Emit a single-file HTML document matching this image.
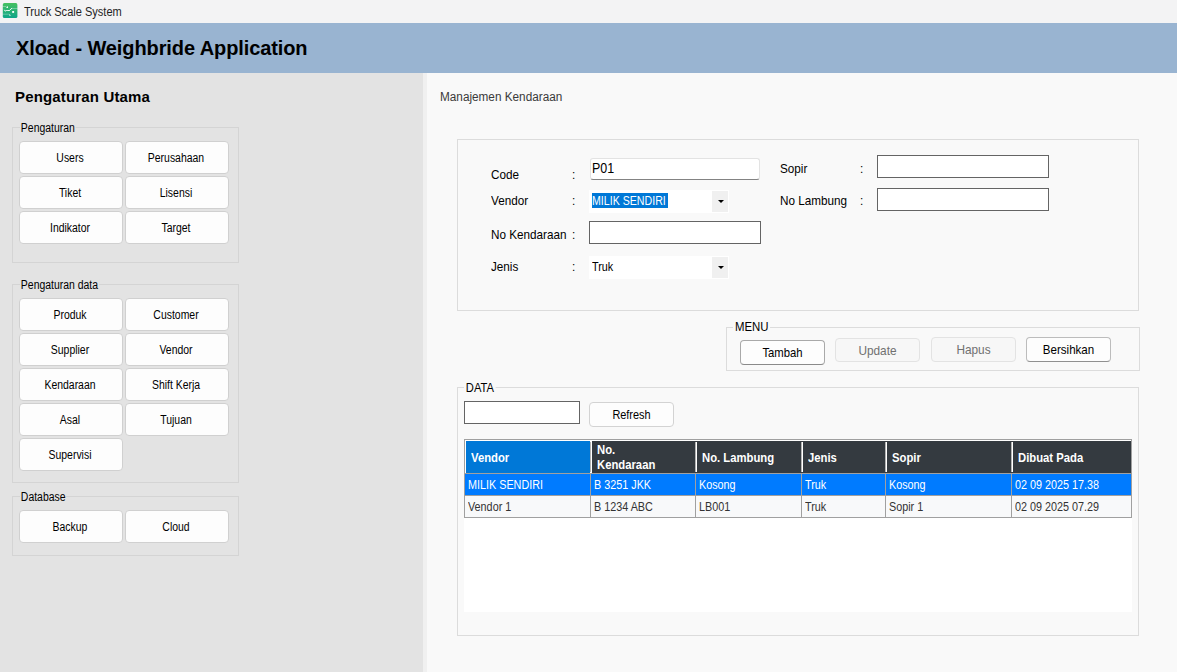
<!DOCTYPE html>
<html><head><meta charset="utf-8">
<style>
*{margin:0;padding:0;box-sizing:border-box}
html,body{width:1177px;height:672px;overflow:hidden;background:#f9f9f9;font-family:"Liberation Sans",sans-serif;color:#000}
.a{position:absolute}

.t{position:absolute;white-space:nowrap;line-height:1}
#titlebar{left:0;top:0;width:1177px;height:23px;background:#f3f3f4}
#hdr{left:0;top:23px;width:1177px;height:50px;background:#99b4d1}
#left{left:0;top:73px;width:423px;height:599px;background:#e3e3e3}
#strip{left:423px;top:73px;width:4px;height:599px;background:#f0f0f0}
#right{left:427px;top:73px;width:750px;height:599px;background:#f9f9f9}
.grp{position:absolute;border:1px solid #d4d4d4}
.btn{position:absolute;background:#fdfdfd;border:1px solid #d0d0d0;border-radius:4px;font-size:12px;text-align:center;color:#000}
.btn span{position:absolute;left:0;right:2px;top:10px;line-height:1;transform:scaleX(0.87)}
.lbl{position:absolute;font-size:12px;line-height:1;white-space:nowrap;padding:0 2px}
.glbl{position:absolute;font-size:12px;line-height:1;white-space:nowrap;background:#e3e3e3;padding:0 1px;transform:scaleX(0.87);transform-origin:0 0}
.rlbl{position:absolute;font-size:13px;line-height:1;white-space:nowrap;color:#000;transform:scaleX(0.9);transform-origin:0 0}
.tb{position:absolute;background:#fff;border:1px solid #646464}
.wbtn{position:absolute;background:#fdfdfd;border:1px solid #b8b8b8;border-radius:4px;font-size:13px;text-align:center}
.wbtn.dis{background:#f7f7f7;border-color:#e3e3e3;color:#707070}
.wbtn span{position:absolute;left:0;right:0;line-height:1;transform:scaleX(0.89)}
.th{position:absolute;font-size:12px;font-weight:bold;color:#fff;white-space:nowrap;line-height:1;transform:scaleX(0.94);transform-origin:0 0}
.td{position:absolute;font-size:12px;white-space:nowrap;line-height:1;transform:scaleX(0.9);transform-origin:0 0}
</style></head><body>
<div id="titlebar" class="a"></div>
<svg class="a" style="left:0;top:0" width="22" height="22" viewBox="0 0 22 22">
<defs><linearGradient id="ig" x1="0" y1="0" x2="0" y2="1"><stop offset="0" stop-color="#46c060"/><stop offset="1" stop-color="#0ea58a"/></linearGradient></defs>
<rect x="2.8" y="3.1" width="14.6" height="15" rx="1.6" fill="url(#ig)"/>
<g stroke="#fff" fill="none" stroke-linecap="round">
<path d="M3 6.5H6" stroke-width="0.7" opacity="0.45"/>
<path d="M12 8.5H17.3" stroke-width="0.7" opacity="0.45"/>
<path d="M3 14.2H8.5" stroke-width="0.7" opacity="0.45"/>
<path d="M4.4 10.2Q4.6 11.4 5.9 11L6.3 10.5H9.4L11.8 8.3" stroke-width="0.9" stroke-dasharray="1.4 0.6"/>
</g>
<g fill="#fff">
<path d="M6 7.8L7.9 5.9L8 7.9Z"/>
<rect x="12.2" y="11" width="1.9" height="1.9"/>
<path d="M9 14.1L10.9 15.3L9.7 15.9Z"/>
</g>
</svg>
<div class="t" style="left:24px;top:6px;font-size:12px;color:#1f1f1f;transform:scaleX(0.92);transform-origin:0 0">Truck Scale System</div>
<div id="hdr" class="a"></div>
<div class="t" style="left:16px;top:38px;font-size:20px;font-weight:bold;letter-spacing:-0.1px">Xload - Weighbride Application</div>
<div id="left" class="a"></div>
<div id="strip" class="a"></div>
<div id="right" class="a"></div>

<div class="t" style="left:15px;top:89px;font-size:15px;font-weight:bold;letter-spacing:0.16px">Pengaturan Utama</div>

<!-- group 1 -->
<div class="grp" style="left:12px;top:127px;width:227px;height:136px"></div>
<div class="glbl" style="left:20px;top:122px">Pengaturan</div>
<div class="btn" style="left:19px;top:141px;width:104px;height:33px"><span>Users</span></div>
<div class="btn" style="left:125px;top:141px;width:104px;height:33px"><span>Perusahaan</span></div>
<div class="btn" style="left:19px;top:176px;width:104px;height:33px"><span>Tiket</span></div>
<div class="btn" style="left:125px;top:176px;width:104px;height:33px"><span>Lisensi</span></div>
<div class="btn" style="left:19px;top:211px;width:104px;height:33px"><span>Indikator</span></div>
<div class="btn" style="left:125px;top:211px;width:104px;height:33px"><span>Target</span></div>

<!-- group 2 -->
<div class="grp" style="left:12px;top:284px;width:227px;height:199px"></div>
<div class="glbl" style="left:20px;top:279px">Pengaturan data</div>
<div class="btn" style="left:19px;top:298px;width:104px;height:33px"><span>Produk</span></div>
<div class="btn" style="left:125px;top:298px;width:104px;height:33px"><span>Customer</span></div>
<div class="btn" style="left:19px;top:333px;width:104px;height:33px"><span>Supplier</span></div>
<div class="btn" style="left:125px;top:333px;width:104px;height:33px"><span>Vendor</span></div>
<div class="btn" style="left:19px;top:368px;width:104px;height:33px"><span>Kendaraan</span></div>
<div class="btn" style="left:125px;top:368px;width:104px;height:33px"><span>Shift Kerja</span></div>
<div class="btn" style="left:19px;top:403px;width:104px;height:33px"><span>Asal</span></div>
<div class="btn" style="left:125px;top:403px;width:104px;height:33px"><span>Tujuan</span></div>
<div class="btn" style="left:19px;top:438px;width:104px;height:33px"><span>Supervisi</span></div>

<!-- group 3 -->
<div class="grp" style="left:12px;top:496px;width:227px;height:60px"></div>
<div class="glbl" style="left:20px;top:491px">Database</div>
<div class="btn" style="left:19px;top:510px;width:104px;height:33px"><span>Backup</span></div>
<div class="btn" style="left:125px;top:510px;width:104px;height:33px"><span>Cloud</span></div>

<!-- right panel -->
<div class="t" style="left:440px;top:91px;font-size:12px;color:#3a3a3a;transform:scaleX(0.98);transform-origin:0 0">Manajemen Kendaraan</div>

<div class="grp" style="left:457px;top:139px;width:682px;height:172px;border-color:#dcdcdc"></div>

<!-- form -->
<div class="rlbl" style="left:491px;top:168px">Code</div>
<div class="rlbl" style="left:572px;top:168px">:</div>
<div class="rlbl" style="left:491px;top:194px">Vendor</div>
<div class="rlbl" style="left:572px;top:194px">:</div>
<div class="rlbl" style="left:491px;top:228px">No Kendaraan</div>
<div class="rlbl" style="left:572px;top:228px">:</div>
<div class="rlbl" style="left:491px;top:260px">Jenis</div>
<div class="rlbl" style="left:572px;top:260px">:</div>

<div class="a" style="left:590px;top:158px;width:170px;height:22px;background:#fff;border:1px solid #e3e3e3;border-bottom:1px solid #838383;border-radius:3px"></div>
<div class="t" style="left:592px;top:161px;font-size:14px;transform:scaleX(0.89);transform-origin:0 0">P01</div>

<div class="a" style="left:589px;top:190px;width:140px;height:23px;background:#fff"></div>
<div class="a" style="left:712px;top:191px;width:16px;height:21px;background:#f0f0f0"></div>
<div class="a" style="left:718px;top:200px;width:0;height:0;border-left:3px solid transparent;border-right:3px solid transparent;border-top:3px solid #000"></div>
<div class="a" style="left:592px;top:193px;width:76px;height:15px;background:#0078d7"></div>
<div class="t" style="left:592px;top:195px;font-size:12px;color:#fff;transform:scaleX(0.885);transform-origin:0 0">MILIK SENDIRI</div>

<div class="tb" style="left:589px;top:221px;width:172px;height:23px"></div>

<div class="a" style="left:589px;top:256px;width:140px;height:23px;background:#fff"></div>
<div class="a" style="left:712px;top:257px;width:16px;height:21px;background:#f0f0f0"></div>
<div class="a" style="left:718px;top:266px;width:0;height:0;border-left:3px solid transparent;border-right:3px solid transparent;border-top:3px solid #000"></div>
<div class="t" style="left:592px;top:261px;font-size:12px;transform:scaleX(0.9);transform-origin:0 0">Truk</div>

<div class="rlbl" style="left:780px;top:162px">Sopir</div>
<div class="rlbl" style="left:860px;top:162px">:</div>
<div class="rlbl" style="left:780px;top:194px">No Lambung</div>
<div class="rlbl" style="left:860px;top:194px">:</div>
<div class="tb" style="left:877px;top:155px;width:172px;height:23px"></div>
<div class="tb" style="left:877px;top:188px;width:172px;height:23px"></div>

<!-- MENU -->
<div class="grp" style="left:726px;top:327px;width:414px;height:44px;border-color:#dcdcdc"></div>
<div class="t" style="left:733px;top:321px;font-size:12px;background:#f9f9f9;padding:0 2px;transform:scaleX(0.95);transform-origin:0 0">MENU</div>
<div class="wbtn" style="left:740px;top:340px;width:85px;height:25px;border-color:#a9a9a9;border-bottom-color:#8a8a8a"><span style="top:5px;transform:scaleX(0.87)">Tambah</span></div>
<div class="wbtn dis" style="left:835px;top:338px;width:85px;height:24px"><span style="top:5px;transform:scaleX(0.91)">Update</span></div>
<div class="wbtn dis" style="left:931px;top:337px;width:85px;height:25px"><span style="top:5px;transform:scaleX(0.91)">Hapus</span></div>
<div class="wbtn" style="left:1026px;top:337px;width:85px;height:25px;border-color:#bcbcbc;border-bottom-color:#909090"><span style="top:5px">Bersihkan</span></div>

<!-- DATA -->
<div class="grp" style="left:457px;top:387px;width:682px;height:249px;border-color:#dcdcdc"></div>
<div class="t" style="left:464px;top:382px;font-size:12px;background:#f9f9f9;padding:0 2px;transform:scaleX(0.93);transform-origin:0 0">DATA</div>
<div class="tb" style="left:464px;top:401px;width:116px;height:23px"></div>
<div class="wbtn" style="left:589px;top:402px;width:85px;height:25px;border-color:#d3d3d3"><span style="top:5px;transform:scaleX(0.84)">Refresh</span></div>

<div class="a" style="left:464px;top:439px;width:668px;height:173px;background:#fff"></div>
<div class="a" style="left:464px;top:439px;width:668px;height:79px;border:1px solid #a0a0a0"></div>
<div class="a" style="left:466px;top:441px;width:124px;height:32px;background:#0078d7"></div>
<div class="a" style="left:592px;top:441px;width:539px;height:32px;background:#343a40"></div>
<div class="a" style="left:465px;top:474px;width:666px;height:21px;background:#007bff"></div>
<div class="a" style="left:465px;top:496px;width:666px;height:21px;background:#f8f9fa"></div>
<div class="a" style="left:465px;top:473px;width:666px;height:1px;background:#a0a0a0"></div>
<div class="a" style="left:465px;top:495px;width:666px;height:1px;background:#a0a0a0"></div>
<div class="a" style="left:590px;top:474px;width:1px;height:43px;background:#a0a0a0"></div>
<div class="a" style="left:695px;top:474px;width:1px;height:43px;background:#a0a0a0"></div>
<div class="a" style="left:801px;top:474px;width:1px;height:43px;background:#a0a0a0"></div>
<div class="a" style="left:885px;top:474px;width:1px;height:43px;background:#a0a0a0"></div>
<div class="a" style="left:1011px;top:474px;width:1px;height:43px;background:#a0a0a0"></div>
<div class="a" style="left:465px;top:440px;width:666px;height:1px;background:#fff"></div>
<div class="a" style="left:465px;top:440px;width:1px;height:33px;background:#fff"></div>
<div class="a" style="left:590px;top:442px;width:1px;height:30px;background:#b4b4b4"></div><div class="a" style="left:591px;top:442px;width:1px;height:30px;background:#fff"></div>
<div class="a" style="left:695px;top:442px;width:1px;height:30px;background:#b4b4b4"></div><div class="a" style="left:696px;top:442px;width:1px;height:30px;background:#fff"></div>
<div class="a" style="left:801px;top:442px;width:1px;height:30px;background:#b4b4b4"></div><div class="a" style="left:802px;top:442px;width:1px;height:30px;background:#fff"></div>
<div class="a" style="left:885px;top:442px;width:1px;height:30px;background:#b4b4b4"></div><div class="a" style="left:886px;top:442px;width:1px;height:30px;background:#fff"></div>
<div class="a" style="left:1011px;top:442px;width:1px;height:30px;background:#b4b4b4"></div><div class="a" style="left:1012px;top:442px;width:1px;height:30px;background:#fff"></div>
<div class="th" style="left:471px;top:452px">Vendor</div>
<div class="th" style="left:597px;top:443px;line-height:15px">No.<br>Kendaraan</div>
<div class="th" style="left:702px;top:452px">No. Lambung</div>
<div class="th" style="left:808px;top:452px">Jenis</div>
<div class="th" style="left:892px;top:452px">Sopir</div>
<div class="th" style="left:1018px;top:452px">Dibuat Pada</div>
<div class="td" style="left:468px;top:479px;color:#fff">MILIK SENDIRI</div>
<div class="td" style="left:594px;top:479px;color:#fff">B 3251 JKK</div>
<div class="td" style="left:699px;top:479px;color:#fff">Kosong</div>
<div class="td" style="left:805px;top:479px;color:#fff">Truk</div>
<div class="td" style="left:889px;top:479px;color:#fff">Kosong</div>
<div class="td" style="left:1015px;top:479px;color:#fff">02 09 2025 17.38</div>
<div class="td" style="left:468px;top:501px;color:#333">Vendor 1</div>
<div class="td" style="left:594px;top:501px;color:#333">B 1234 ABC</div>
<div class="td" style="left:699px;top:501px;color:#333">LB001</div>
<div class="td" style="left:805px;top:501px;color:#333">Truk</div>
<div class="td" style="left:889px;top:501px;color:#333">Sopir 1</div>
<div class="td" style="left:1015px;top:501px;color:#333">02 09 2025 07.29</div>
</body></html>
